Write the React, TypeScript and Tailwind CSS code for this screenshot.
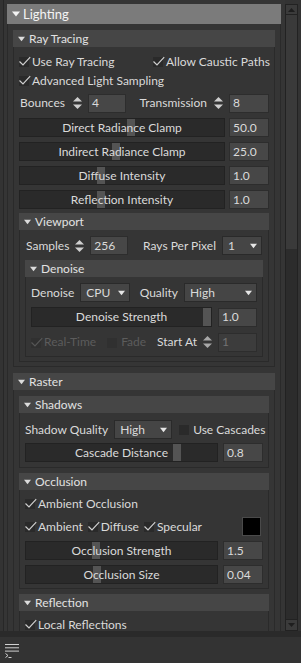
import React from "react";

const Tri = ({ className = "" }: { className?: string }) => (
  <svg width="8" height="6" viewBox="0 0 8 6" className={className}>
    <path d="M0 0.5H8L4 5.5Z" fill="currentColor" />
  </svg>
);

const Spin = ({ className = "" }: { className?: string }) => (
  <svg width="9" height="14" viewBox="0 0 9 14" className={"shrink-0 " + className}>
    <path d="M0 5.5L4.5 1L9 5.5Z" fill="currentColor" />
    <path d="M0 8.5H9L4.5 13Z" fill="currentColor" />
  </svg>
);

const Check = ({ checked = true, dim = false }: { checked?: boolean; dim?: boolean }) => (
  <span className="relative inline-block w-[12px] h-[11px] shrink-0">
    <span
      className={
        dim
          ? "absolute left-0 top-[1px] w-[10px] h-[10px] bg-[#303030]"
          : "absolute left-0 top-[1px] w-[10px] h-[10px] bg-[#2a2a2a]"
      }
    />
    {checked && (
      <svg
        width="12"
        height="11"
        viewBox="0 0 12 11"
        className={dim ? "absolute left-0 top-0 text-[#565656]" : "absolute left-0 top-0 text-[#cfcfcf]"}
      >
        <path d="M0.5 5.5L4 9L11.2 1.2" stroke="currentColor" strokeWidth="1.2" fill="none" />
      </svg>
    )}
  </span>
);

const CheckItem = ({
  label,
  checked = true,
  dim = false,
  className = "",
}: {
  label: string;
  checked?: boolean;
  dim?: boolean;
  className?: string;
}) => (
  <div className={"flex items-center gap-[1px] shrink-0 " + className}>
    <Check checked={checked} dim={dim} />
    <span className={dim ? "text-[#5c5c5c]" : ""}>{label}</span>
  </div>
);

const Value = ({ v, w = "w-[40px]", dim = false }: { v: string; w?: string; dim?: boolean }) => (
  <div
    className={
      (dim ? "bg-[#3c3c3c] text-[#727272] " : "bg-[#474747] ") +
      w +
      " h-[19px] border border-[#2d2d2d] flex items-center pl-[3px] shrink-0"
    }
  >
    {v}
  </div>
);

const Dropdown = ({ v, w }: { v: string; w: string }) => (
  <div
    className={
      w +
      " h-[19px] bg-[#454545] border border-[#2a2a2a] flex items-center justify-between pl-[5px] pr-[4px] shrink-0"
    }
  >
    <span>{v}</span>
    <Tri className="text-[#e6e6e6] w-[7px]" />
  </div>
);

const Slider = ({ label, pos }: { label: string; pos: number }) => (
  <div className="relative flex-1 h-[19px] bg-[#2a2a2a] border border-[#222] flex items-center justify-center overflow-hidden">
    <div className="absolute top-0 bottom-0 w-[8px] bg-[#545454]" style={{ left: pos }} />
    <span className="relative">{label}</span>
  </div>
);

const SliderRow = ({
  label,
  pos,
  v,
  gap,
  vw = "w-[40px]",
  className = "",
}: {
  label: string;
  pos: number;
  v: string;
  gap: string;
  vw?: string;
  className?: string;
}) => (
  <div className={"flex items-center " + gap + " " + className}>
    <Slider label={label} pos={pos} />
    <Value v={v} w={vw} />
  </div>
);

const Section = ({
  title,
  top = false,
  bodyClass = "",
  className = "",
  children,
}: {
  title: string;
  top?: boolean;
  bodyClass?: string;
  className?: string;
  children: React.ReactNode;
}) => (
  <div className={"flex flex-col shrink-0 " + className}>
    {top ? (
      <div className="h-[20px] bg-[#7b7b7b] flex items-center pl-[5px] gap-[3px] text-[13px] text-[#f4f4f4] shrink-0">
        <Tri className="text-[#f4f4f4]" />
        <span>{title}</span>
      </div>
    ) : (
      <div className="h-[17px] bg-[#464646] flex items-center pl-[5px] gap-[4px] text-[#e2e2e2] shrink-0">
        <Tri className="text-[#dcdcdc] w-[7px]" />
        <span>{title}</span>
      </div>
    )}
    <div className={"border border-t-0 border-[#2a2a2a] px-[5px] flex flex-col " + bodyClass}>{children}</div>
  </div>
);

export default function App() {
  return (
    <div className="w-[301px] h-[663px] bg-[#333333] flex flex-col overflow-hidden whitespace-nowrap font-['Lato',sans-serif] text-[12px] leading-none text-[#dadada]">
      <div className="h-[631px] flex shrink-0">
        <div className="flex-1 ml-[3px] border-l border-[#272727] bg-[#353535] pl-[3px] pr-[4px] pt-[4px] overflow-hidden">
          <Section title="Lighting" top bodyClass="pt-[6px] gap-[6px] pb-[5px]">
            <Section title="Ray Tracing" bodyClass="pt-[5px] pb-[4px]">
              <div className="grid grid-cols-[134px_1fr] h-[19px] items-center">
                <CheckItem label="Use Ray Tracing" />
                <CheckItem label="Allow Caustic Paths" />
              </div>
              <div className="h-[19px] flex items-center">
                <CheckItem label="Advanced Light Sampling" />
              </div>
              <div className="h-[20px] mt-[3px] flex items-center">
                <span className="pl-[1px]">Bounces</span>
                <Spin className="ml-[8px] text-[#cfcfcf]" />
                <div className="ml-[6px]">
                  <Value v="4" w="w-[38px]" />
                </div>
                <div className="ml-auto flex items-center">
                  <span>Transmission</span>
                  <Spin className="ml-[7px] text-[#cfcfcf]" />
                  <div className="ml-[6px]">
                    <Value v="8" w="w-[40px]" />
                  </div>
                </div>
              </div>
              <SliderRow className="mt-[5px]" gap="gap-[4px]" label="Direct Radiance Clamp" pos={107} v="50.0" />
              <SliderRow className="mt-[5px]" gap="gap-[4px]" label="Indirect Radiance Clamp" pos={92} v="25.0" />
              <SliderRow className="mt-[5px]" gap="gap-[4px]" label="Diffuse Intensity" pos={77} v="1.0" />
              <SliderRow className="mt-[5px]" gap="gap-[4px]" label="Reflection Intensity" pos={77} v="1.0" />
              <Section title="Viewport" className="mt-[4px]" bodyClass="pt-[6px] pb-[4px]">
                <div className="h-[19px] flex items-center">
                  <span className="pl-[1px]">Samples</span>
                  <Spin className="ml-[6px] text-[#cfcfcf]" />
                  <div className="ml-[6px]">
                    <Value v="256" w="w-[38px]" />
                  </div>
                  <div className="ml-auto mr-[1px] flex items-center">
                    <span>Rays Per Pixel</span>
                    <div className="ml-[6px]">
                      <Dropdown v="1" w="w-[40px]" />
                    </div>
                  </div>
                </div>
                <Section title="Denoise" className="mt-[5px]" bodyClass="pt-[6px] pb-[4px]">
                  <div className="h-[19px] flex items-center">
                    <span>Denoise</span>
                    <div className="ml-[6px]">
                      <Dropdown v="CPU" w="w-[50px]" />
                    </div>
                    <div className="ml-auto flex items-center">
                      <span>Quality</span>
                      <div className="ml-[6px]">
                        <Dropdown v="High" w="w-[73px]" />
                      </div>
                    </div>
                  </div>
                  <div className="mt-[5px] h-[20px] flex items-center gap-[6px]">
                    <div className="relative flex-1 h-[20px] bg-[#2a2a2a] border border-[#222] flex items-center justify-center overflow-hidden">
                      <div className="absolute top-0 bottom-0 right-0 w-[8px] bg-[#545454]" />
                      <span className="relative">Denoise Strength</span>
                    </div>
                    <Value v="1.0" w="w-[39px]" />
                  </div>
                  <div className="mt-[5px] h-[20px] flex items-center">
                    <CheckItem label="Real-Time" dim />
                    <CheckItem label="Fade" dim checked={false} className="ml-[11px] gap-[2px]" />
                    <div className="ml-auto flex items-center">
                      <span>Start At</span>
                      <Spin className="ml-[6px] text-[#a8a8a8]" />
                      <div className="ml-[6px]">
                        <Value v="1" w="w-[39px]" dim />
                      </div>
                    </div>
                  </div>
                </Section>
              </Section>
            </Section>
            <Section title="Raster" bodyClass="pt-[6px] pb-[4px] gap-[5px]">
              <Section title="Shadows" bodyClass="pt-[7px] pb-[5px]">
                <div className="h-[19px] flex items-center">
                  <span>Shadow Quality</span>
                  <div className="ml-[6px]">
                    <Dropdown v="High" w="w-[58px]" />
                  </div>
                  <CheckItem label="Use Cascades" checked={false} className="ml-[7px] gap-[2px]" />
                </div>
                <SliderRow className="mt-[4px]" gap="gap-[5px]" label="Cascade Distance" pos={147} v="0.8" />
              </Section>
              <Section title="Occlusion" bodyClass="pt-[4px] pb-[4px]">
                <div className="h-[19px] flex items-center">
                  <CheckItem label="Ambient Occlusion" />
                </div>
                <div className="h-[19px] mt-[4px] flex items-center">
                  <CheckItem label="Ambient" />
                  <CheckItem label="Diffuse" className="ml-[5px]" />
                  <CheckItem label="Specular" className="ml-[5px]" />
                  <div className="ml-auto mr-[2px] w-[19px] h-[19px] bg-black border border-[#4a4a4a]" />
                </div>
                <SliderRow className="mt-[5px]" gap="gap-[5px]" label="Occlusion Strength" pos={66} v="1.5" />
                <SliderRow className="mt-[5px]" gap="gap-[5px]" label="Occlusion Size" pos={67} v="0.04" />
              </Section>
              <Section title="Reflection" bodyClass="pt-[4px] pb-[4px]">
                <div className="h-[19px] flex items-center">
                  <CheckItem label="Local Reflections" />
                </div>
              </Section>
            </Section>
          </Section>
        </div>
        <div className="w-[13px] mt-[4px] mr-[3px] border border-[#222] bg-[#2c2c2c] flex flex-col shrink-0">
          <div className="h-[10px] bg-[#3b3b3b] border-b border-[#222] flex items-center justify-center text-[#1e1e1e]">
            <svg width="7" height="4" viewBox="0 0 7 4">
              <path d="M0 4L3.5 0L7 4Z" fill="currentColor" />
            </svg>
          </div>
          <div className="h-[234px] bg-[#3a3a3a]" />
          <div className="flex-1" />
          <div className="h-[11px] bg-[#3b3b3b] border-t border-[#222] flex items-center justify-center text-[#1e1e1e]">
            <svg width="7" height="4" viewBox="0 0 7 4">
              <path d="M0 0H7L3.5 4Z" fill="currentColor" />
            </svg>
          </div>
        </div>
      </div>
      <div className="h-[6px] bg-[#2a2a2a] shrink-0" />
      <div className="flex-1 bg-[#333333] pl-[5px] pt-[7px]">
        <svg width="15" height="15" viewBox="0 0 15 15" className="text-[#d0d0d0]">
          <path d="M0 0.5H14M0 3.8H14M0 7.1H14" stroke="currentColor" strokeWidth="1" />
          <path d="M0.5 9.5L3 11.5L0.5 13.5" stroke="currentColor" strokeWidth="1" fill="none" />
          <path d="M3.5 13.5H6.5" stroke="currentColor" strokeWidth="1" />
        </svg>
      </div>
    </div>
  );
}
